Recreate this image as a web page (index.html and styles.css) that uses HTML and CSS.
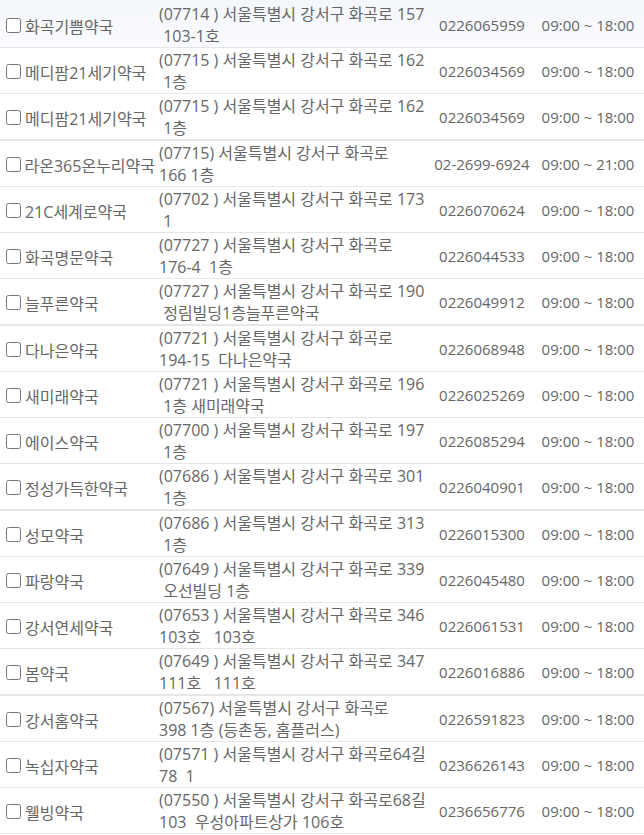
FILE: index.html
```html
<!DOCTYPE html>
<html lang="ko">
<head>
    <meta charset="UTF-8">
    <meta name="viewport" content="width=device-width, initial-scale=1.0">
    <title>약국 목록</title>
    <link rel="stylesheet" href="styles.css">
</head>
<body>
    <div class="list">
        <div class="row first">
            <label class="name"><input type="checkbox" class="check">화곡기쁨약국</label>
            <div class="addr">(07714 ) 서울특별시 강서구 화곡로 157<br>&nbsp;103-1호</div>
            <div class="tel">0226065959</div>
            <div class="time">09:00 ~ 18:00</div>
        </div>
        <div class="row">
            <label class="name"><input type="checkbox" class="check">메디팜21세기약국</label>
            <div class="addr">(07715 ) 서울특별시 강서구 화곡로 162<br>&nbsp;1층</div>
            <div class="tel">0226034569</div>
            <div class="time">09:00 ~ 18:00</div>
        </div>
        <div class="row thick">
            <label class="name"><input type="checkbox" class="check">메디팜21세기약국</label>
            <div class="addr">(07715 ) 서울특별시 강서구 화곡로 162<br>&nbsp;1층</div>
            <div class="tel">0226034569</div>
            <div class="time">09:00 ~ 18:00</div>
        </div>
        <div class="row">
            <label class="name"><input type="checkbox" class="check">라온365온누리약국</label>
            <div class="addr">(07715) 서울특별시 강서구 화곡로<br>166 1층</div>
            <div class="tel">02-2699-6924</div>
            <div class="time">09:00 ~ 21:00</div>
        </div>
        <div class="row">
            <label class="name"><input type="checkbox" class="check">21C세계로약국</label>
            <div class="addr">(07702 ) 서울특별시 강서구 화곡로 173<br>&nbsp;1</div>
            <div class="tel">0226070624</div>
            <div class="time">09:00 ~ 18:00</div>
        </div>
        <div class="row">
            <label class="name"><input type="checkbox" class="check">화곡명문약국</label>
            <div class="addr">(07727 ) 서울특별시 강서구 화곡로<br>176-4 &nbsp;1층</div>
            <div class="tel">0226044533</div>
            <div class="time">09:00 ~ 18:00</div>
        </div>
        <div class="row thick">
            <label class="name"><input type="checkbox" class="check">늘푸른약국</label>
            <div class="addr">(07727 ) 서울특별시 강서구 화곡로 190<br>&nbsp;정림빌딩1층늘푸른약국</div>
            <div class="tel">0226049912</div>
            <div class="time">09:00 ~ 18:00</div>
        </div>
        <div class="row">
            <label class="name"><input type="checkbox" class="check">다나은약국</label>
            <div class="addr">(07721 ) 서울특별시 강서구 화곡로<br>194-15 &nbsp;다나은약국</div>
            <div class="tel">0226068948</div>
            <div class="time">09:00 ~ 18:00</div>
        </div>
        <div class="row">
            <label class="name"><input type="checkbox" class="check">새미래약국</label>
            <div class="addr">(07721 ) 서울특별시 강서구 화곡로 196<br>&nbsp;1층 새미래약국</div>
            <div class="tel">0226025269</div>
            <div class="time">09:00 ~ 18:00</div>
        </div>
        <div class="row">
            <label class="name"><input type="checkbox" class="check">에이스약국</label>
            <div class="addr">(07700 ) 서울특별시 강서구 화곡로 197<br>&nbsp;1층</div>
            <div class="tel">0226085294</div>
            <div class="time">09:00 ~ 18:00</div>
        </div>
        <div class="row thick">
            <label class="name"><input type="checkbox" class="check">정성가득한약국</label>
            <div class="addr">(07686 ) 서울특별시 강서구 화곡로 301<br>&nbsp;1층</div>
            <div class="tel">0226040901</div>
            <div class="time">09:00 ~ 18:00</div>
        </div>
        <div class="row">
            <label class="name"><input type="checkbox" class="check">성모약국</label>
            <div class="addr">(07686 ) 서울특별시 강서구 화곡로 313<br>&nbsp;1층</div>
            <div class="tel">0226015300</div>
            <div class="time">09:00 ~ 18:00</div>
        </div>
        <div class="row">
            <label class="name"><input type="checkbox" class="check">파랑약국</label>
            <div class="addr">(07649 ) 서울특별시 강서구 화곡로 339<br>&nbsp;오선빌딩 1층</div>
            <div class="tel">0226045480</div>
            <div class="time">09:00 ~ 18:00</div>
        </div>
        <div class="row">
            <label class="name"><input type="checkbox" class="check">강서연세약국</label>
            <div class="addr">(07653 ) 서울특별시 강서구 화곡로 346<br>103호 &nbsp;&nbsp;103호</div>
            <div class="tel">0226061531</div>
            <div class="time">09:00 ~ 18:00</div>
        </div>
        <div class="row thick">
            <label class="name"><input type="checkbox" class="check">봄약국</label>
            <div class="addr">(07649 ) 서울특별시 강서구 화곡로 347<br>111호 &nbsp;&nbsp;111호</div>
            <div class="tel">0226016886</div>
            <div class="time">09:00 ~ 18:00</div>
        </div>
        <div class="row">
            <label class="name"><input type="checkbox" class="check">강서홈약국</label>
            <div class="addr">(07567) 서울특별시 강서구 화곡로<br>398 1층 (등촌동, 홈플러스)</div>
            <div class="tel">0226591823</div>
            <div class="time">09:00 ~ 18:00</div>
        </div>
        <div class="row">
            <label class="name"><input type="checkbox" class="check">녹십자약국</label>
            <div class="addr">(07571 ) 서울특별시 강서구 화곡로64길<br>78 &nbsp;1</div>
            <div class="tel">0236626143</div>
            <div class="time">09:00 ~ 18:00</div>
        </div>
        <div class="row">
            <label class="name"><input type="checkbox" class="check">웰빙약국</label>
            <div class="addr">(07550 ) 서울특별시 강서구 화곡로68길<br>103 &nbsp;우성아파트상가 106호</div>
            <div class="tel">0236656776</div>
            <div class="time">09:00 ~ 18:00</div>
        </div>
    </div>
</body>
</html>
```

FILE: styles.css
```css
body {
    margin: 0;
    background-color: #fff;
    font-family: "Open Sans", "Noto Sans CJK KR", sans-serif;
    font-size: 16px;
    color: #666;
}

.list {
    width: 644px;
}

.row {
    display: grid;
    grid-template-columns: 155px 277px 100px 112px;
    align-items: center;
    height: 46px;
    box-sizing: border-box;
    border-bottom: 1px solid #e6e6e6;
}

.row.first {
    height: 48px;
    padding-top: 2px;
    background: linear-gradient(to bottom, #f3f6fb, #fafbfe);
}

.row.thick {
    height: 47px;
    border-bottom-width: 2px;
}

.name {
    display: flex;
    align-items: center;
    padding-left: 5px;
    padding-top: 2px;
    white-space: nowrap;
}

.check {
    width: 15px;
    height: 15px;
    margin: 0 4px 0 1px;
}

.addr {
    padding-left: 4px;
    line-height: 22px;
    white-space: nowrap;
}

.tel,
.time {
    font-size: 15px;
    text-align: center;
    white-space: nowrap;
}
```
